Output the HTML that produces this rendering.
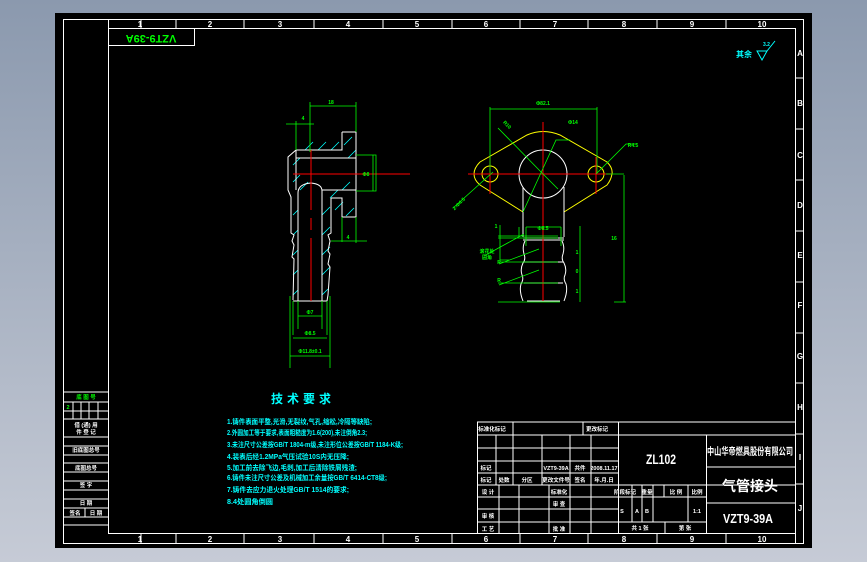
<!DOCTYPE html>
<html><head><meta charset="utf-8"><style>
html,body{margin:0;padding:0;width:867px;height:562px;overflow:hidden;background:linear-gradient(#8b99ae,#c6cbd6);}
svg{display:block}
text{font-family:"Liberation Sans","Noto Sans CJK SC",sans-serif;font-weight:bold}
</style></head><body>
<svg width="867" height="562" viewBox="0 0 867 562" xmlns="http://www.w3.org/2000/svg">
<rect x="55" y="13" width="757" height="535" fill="#000"/>
<g fill="none" stroke="#fff" stroke-width="1">
<rect x="63.5" y="19.5" width="740" height="524"/>
<rect x="108.5" y="28.5" width="687" height="505"/>
<path d="M108.5 19.5V28.5M795.5 534V543"/>
<path d="M141 19v9M176 19v9M244 19v9M314 19v9M383 19v9M452 19v9M520 19v9M588 19v9M657 19v9M726 19v9"/>
<path d="M141 534v9M176 534v9M244 534v9M314 534v9M383 534v9M452 534v9M520 534v9M588 534v9M657 534v9M726 534v9"/>
<path d="M795 78h9M795 129h9M795 180h9M795 231h9M795 282h9M795 333h9M795 383h9M795 434h9M795 484h9"/>
<rect x="108.5" y="28.5" width="86" height="17"/>
<!-- left table -->
<path d="M64 392h44M64 402h44M64 411h44M64 419h44M64 437h44M64 446h44M64 455h44M64 463h44M64 472h44M64 481h44M64 490h44M64 499h44M64 508h44M64 517h44M64 525h44"/>
<path d="M73 402v17M81 402v17M89 402v17M98 402v17M85 508v9"/>
<!-- title block -->
<path d="M477.5 422v112M477 422h318M477 435h141M477 448h141M477 461h141M477 473h141M477 485h318M477 497h141M477 509h141M477 522h141M618 497h88M618 522h88M706 467h89M706 503h89"/>
<path d="M618.5 422v112M706.5 435v99M513 422v13M583 422v13M618 435h177"/>
<path d="M496 435v50M513 435v50M542 435v50M570 435v50M591 435v50"/>
<path d="M499 485v49M519 485v49M549 485v49M570 485v49M591 485v49"/>
<path d="M632 485v37M642 485v37M653 485v37M664 485v12M688 485v37M665 522v12"/>
</g>
<g fill="#fff" font-size="8" text-anchor="middle">
<text x="140" y="27">1</text><text x="210" y="27">2</text><text x="280" y="27">3</text><text x="348" y="27">4</text><text x="417" y="27">5</text><text x="486" y="27">6</text><text x="555" y="27">7</text><text x="624" y="27">8</text><text x="692" y="27">9</text><text x="762" y="27">10</text>
<text x="140" y="542">1</text><text x="210" y="542">2</text><text x="280" y="542">3</text><text x="348" y="542">4</text><text x="417" y="542">5</text><text x="486" y="542">6</text><text x="555" y="542">7</text><text x="624" y="542">8</text><text x="692" y="542">9</text><text x="762" y="542">10</text>
<text x="800" y="56">A</text><text x="800" y="106">B</text><text x="800" y="158">C</text><text x="800" y="208">D</text><text x="800" y="258">E</text><text x="800" y="308">F</text><text x="800" y="359">G</text><text x="800" y="410">H</text><text x="800" y="460">I</text><text x="800" y="511">J</text>
</g>
<text x="151" y="42" font-size="11" fill="#0f0" text-anchor="middle" transform="rotate(180 151 38.5)">VZT9-39A</text>
<!-- left table text -->
<g font-size="5.5" fill="#fff" text-anchor="middle">
<text x="86" y="399" fill="#0f0">底 图 号</text><text x="68" y="409" fill="#0f0">2</text>
<text x="86" y="427">借 (通) 用</text><text x="86" y="434">件 登 记</text>
<text x="86" y="452">旧底图总号</text><text x="86" y="470">底图总号</text>
<text x="86" y="487">签 字</text><text x="86" y="505">日 期</text>
<text x="75" y="515">签名</text><text x="96" y="515">日 期</text>
</g>
<!-- title block text -->
<g font-size="5.5" fill="#fff" text-anchor="middle">
<text x="492" y="431">标准化标记</text><text x="597" y="431">更改标记</text>
<text x="486" y="470">标记</text><text x="556" y="470">VZT9-39A</text><text x="580" y="470">共件</text><text x="604" y="470">2008.11.17</text>
<text x="486" y="482">标记</text><text x="504" y="482">处数</text><text x="527" y="482">分区</text><text x="556" y="482">更改文件号</text><text x="580" y="482">签名</text><text x="604" y="482">年.月.日</text>
<text x="488" y="494">设 计</text><text x="559" y="494">标准化</text>
<text x="559" y="506">审 查</text>
<text x="488" y="518">审 核</text>
<text x="488" y="531">工 艺</text><text x="559" y="531">批 准</text>
<text x="625" y="494">阶段标记</text><text x="647" y="494">重量</text><text x="676" y="494">比 例</text><text x="697" y="494">比例</text>
<text x="622" y="513">S</text><text x="637" y="513">A</text><text x="647" y="513">B</text><text x="697" y="513">1:1</text>
<text x="640" y="530">共 1 张</text><text x="685" y="530">第 张</text>
</g>
<text x="661" y="464" font-size="14" fill="#fff" text-anchor="middle" font-weight="normal" textLength="30" lengthAdjust="spacingAndGlyphs">ZL102</text>
<text x="750" y="455" font-size="10" fill="#fff" text-anchor="middle" textLength="86" lengthAdjust="spacingAndGlyphs">中山华帝燃具股份有限公司</text>
<text x="750" y="491" font-size="14" fill="#fff" text-anchor="middle" font-weight="normal">气管接头</text>
<text x="748" y="523" font-size="13" fill="#fff" text-anchor="middle" font-weight="normal" textLength="50" lengthAdjust="spacingAndGlyphs">VZT9-39A</text>
<!-- surface symbol -->
<g fill="#0ff" stroke="#0ff">
<text x="744" y="57" font-size="8" stroke="none" text-anchor="middle">其余</text>
<text x="763" y="46" font-size="5" stroke="none">3.2</text>
<path d="M757 51h10l-5 9zM767 51l8-10" fill="none"/>
</g>
<!-- tech requirements -->
<g fill="#0ff">
<text x="303" y="403" font-size="12" text-anchor="middle" letter-spacing="4">技术要求</text>
<g font-size="7">
<text x="227" y="424" textLength="145" lengthAdjust="spacingAndGlyphs">1.铸件表面平整,光滑,无裂纹,气孔,缩松,冷隔等缺陷;</text>
<text x="227" y="435" textLength="140" lengthAdjust="spacingAndGlyphs">2.外圆加工等于要求,表面粗糙度为1.6(200),未注倒角2.3;</text>
<text x="227" y="447" textLength="176" lengthAdjust="spacingAndGlyphs">3.未注尺寸公差按GB/T 1804-m级,未注形位公差按GB/T 1184-K级;</text>
<text x="227" y="459" textLength="122" lengthAdjust="spacingAndGlyphs">4.装表后经1.2MPa气压试验10S内无压降;</text>
<text x="227" y="470" textLength="130" lengthAdjust="spacingAndGlyphs">5.加工前去除飞边,毛刺,加工后清除铁屑残渣;</text>
<text x="227" y="480" textLength="160" lengthAdjust="spacingAndGlyphs">6.铸件未注尺寸公差及机械加工余量按GB/T 6414-CT8级;</text>
<text x="227" y="492" textLength="122" lengthAdjust="spacingAndGlyphs">7.铸件去应力退火处理GB/T 1514的要求;</text>
<text x="227" y="504" textLength="46" lengthAdjust="spacingAndGlyphs">8.4处圆角倒圆</text>
</g></g>
<!-- LEFT VIEW -->
<g fill="none" stroke="#0ff" stroke-width="0.8">
<path d="M305 150l8-8M318 150l8-8M331 150l8-8M344 145l8-8M348 158l8-8M300 190l8-8M300 175l-7 7M293 165l7-7M330 198l8-8M342 190l8-8M335 210l8-8M346 216l8-8M293 215l5-5M293 235l5-5M293 255l5-5M293 275l5-5M293 295l5-5M322 215l8-8M322 235l8-8M322 255l8-8M322 275l8-8M322 295l6-6"/>
</g>
<g fill="none" stroke="#fff" stroke-width="1">
<path d="M342 132h14v85h-14v-19h-11"/>
<path d="M342 132v18h-46l-8 7v33l3 7v36l3 2l-2 6l2 4l-2 12l2 2l-1 41"/>
<path d="M296 150v8h60M322 190h34"/>
<path d="M298 301v-108q0-9 13-10q11 1 11 8v110"/>
<path d="M331 198v35l-3 2l2 6l-2 10l2 3l-2 10l2 3l-2 28l-1 6M293 301h34"/>
<path d="M296 158v32"/>
</g>
<g stroke="#f00" stroke-width="1" fill="none">
<path d="M293 174h117"/>
<path d="M311 150v60M311 218v12M311 238v63"/>
</g>
<g stroke="#0f0" stroke-width="0.8" fill="none">
<path d="M310 106h46M310 102v50M356 102v30M286 124h28M296 121v29M356 155h20v36h-20M373 155v36M331 241h36M342 217v25M356 217v26"/>
<path d="M298 301v28M322 301v28M298 316h24M293 301v34M327 301v34M293 338h34M290 296v72M330 296v72M290 356h40"/>
</g>
<g fill="#0f0" font-size="5" text-anchor="middle">
<text x="331" y="104">18</text><text x="303" y="120">4</text><text x="366" y="176">Φ8</text><text x="348" y="239">4</text>
<text x="310" y="314">Φ7</text><text x="310" y="335">Φ8.5</text><text x="310" y="353">Φ11.8±0.1</text>
</g>
<!-- RIGHT VIEW -->
<g fill="none" stroke="#ff0" stroke-width="1">
<path d="M480 162L527 135Q543 128 560 135L607 162Q613 168 612 174Q611 180 607 185L564 212M523 212L480 185Q474 180 474 174Q474 168 480 162"/>
<circle cx="490" cy="174" r="8"/><circle cx="596" cy="174" r="8"/>
</g>
<g fill="none" stroke="#fff" stroke-width="1">
<circle cx="543" cy="174" r="24"/>
<path d="M523 187V237M564 187V237M523 238h41M523 240h41"/>
<path d="M525 241q-3 6-1 13q2 5 -1 9q-3 6 -1 12q2 4-1 9q-2 7 2 17M562 241q3 6 1 13q-2 5 1 9q3 6 1 12q-2 4 1 9q2 7-2 17M527 301h33M524 262h39M524 283h39"/>
</g>
<g stroke="#f00" stroke-width="1" fill="none">
<path d="M468 174h144M543 122v179M490 157v37M596 157v37"/>
</g>
<g stroke="#0f0" stroke-width="0.8" fill="none">
<path d="M490 109h107M490 107v66M597 107v66M498 128l45 46l15 15M523 212l33-72h14M596 174l30-30h10M453 208l40-36M606 174h14M612 174h12M624 175v127M614 302h12M519 227v9"/>
<path d="M526 227v19M561 227v19M526 227h35M498 236h60M498 238h60M500 225v35M484 256l40-22M500 260h10M498 262h60M498 283h60M498 302h62M580 226v76M499 264l40-15M499 285l40-15"/>
</g>
<g fill="#0f0" font-size="5" text-anchor="middle">
<text x="543" y="105">Φ82.1</text><text x="573" y="124">Φ14</text><text x="506" y="126" transform="rotate(45 506 126)">R10</text><text x="633" y="147">R4.5</text>
<text x="460" y="205" transform="rotate(-45 460 205)">2-Φ4.5</text><text x="543" y="230">Φ8.5</text><text x="614" y="240">16</text>
<text x="487" y="253">滚花处</text><text x="487" y="259">圆角</text><text x="499" y="264">R</text><text x="499" y="282">R</text>
<text x="577" y="254">1</text><text x="577" y="273">0</text><text x="577" y="293">1</text><text x="496" y="228">1</text>
</g>
</svg>
</body></html>
